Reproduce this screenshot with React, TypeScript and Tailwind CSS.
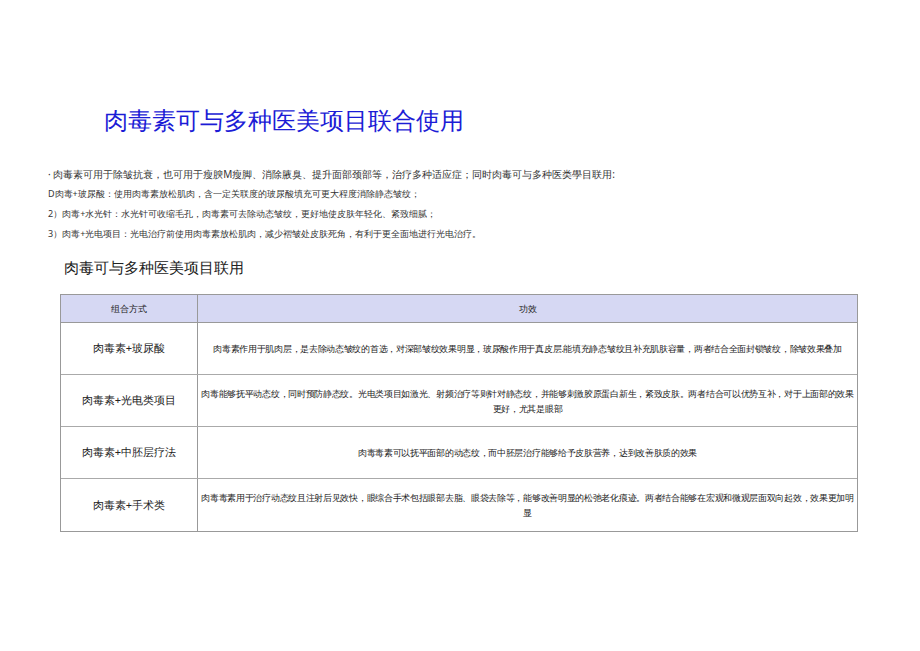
export default function App() {
  const rows = [
    ["肉毒素+玻尿酸", "肉毒素作用于肌肉层，是去除动态皱纹的首选，对深部皱纹效果明显，玻尿酸作用于真皮层.能填充静态皱纹且补充肌肤容量，两者结合全面封锁皱纹，除皱效果叠加"],
    ["肉毒素+光电类项目", "肉毒能够抚平动态纹，同时预防静态纹。光电类项目如激光、射频治疗等则针对静态纹，并能够刺激胶原蛋白新生，紧致皮肤。两者结合可以优势互补，对于上面部的效果更好，尤其是眼部"],
    ["肉毒素+中胚层疗法", "肉毒毒素可以抚平面部的动态纹，而中胚层治疗能够给予皮肤营养，达到改善肤质的效果"],
    ["肉毒素+手术类", "肉毒毒素用于治疗动态纹且注射后见效快，眼综合手术包括眼部去脂、眼袋去除等，能够改善明显的松弛老化痕迹。两者结合能够在宏观和微观层面双向起效，效果更加明显"],
  ];
  return (
    <div className="w-[920px] h-[651px] bg-white text-[#222] font-['Liberation_Sans','Noto_Sans_CJK_SC',sans-serif]">
      <div className="pt-[104px] pl-[104px] text-[24px] leading-[32px] text-[#1c1cd6]">肉毒素可与多种医美项目联合使用</div>
      <div className="mt-[28px] pl-[48px] text-[10px] leading-[20px] text-[#333]">
        <div>· 肉毒素可用于除皱抗衰，也可用于瘦腴M瘦脚、消除腋臭、提升面部颈部等，治疗多种适应症；同时肉毒可与多种医类學目联用:</div>
        <div className="text-[9px]">D肉毒+玻尿酸：使用肉毒素放松肌肉，含一定关联度的玻尿酸填充可更大程度消除静态皱纹；</div>
        <div className="text-[9px]">2）肉毒+水光针：水光针可收缩毛孔，肉毒素可去除动态皱纹，更好地使皮肤年轻化、紧致细腻；</div>
        <div className="text-[9px]">3）肉毒+光电项目：光电治疗前使用肉毒素放松肌肉，减少褶皱处皮肤死角，有利于更全面地进行光电治疗。</div>
      </div>
      <div className="mt-[13px] pl-[64px] text-[15px] leading-[20px] text-[#222]">肉毒可与多种医美项目联用</div>
      <div className="mt-[17px] ml-[60px] w-[798px] border border-[#999] text-[9px] text-[#222]">
        <div className="flex h-[28px] bg-[#d6d8f3] border-b border-[#999]">
          <div className="w-[137px] border-r border-[#999] flex items-center justify-center">组合方式</div>
          <div className="flex-1 flex items-center justify-center">功效</div>
        </div>
        {rows.map((r, i) => (
          <div key={i} className={`flex h-[52px] ${i < rows.length - 1 ? "border-b border-[#aaa]" : ""}`}>
            <div className="w-[137px] border-r border-[#999] flex items-center justify-center text-[11px]">{r[0]}</div>
            <div className="flex-1 flex items-center justify-center text-center leading-[15px] tracking-[-0.3px]">{r[1]}</div>
          </div>
        ))}
      </div>
    </div>
  );
}
